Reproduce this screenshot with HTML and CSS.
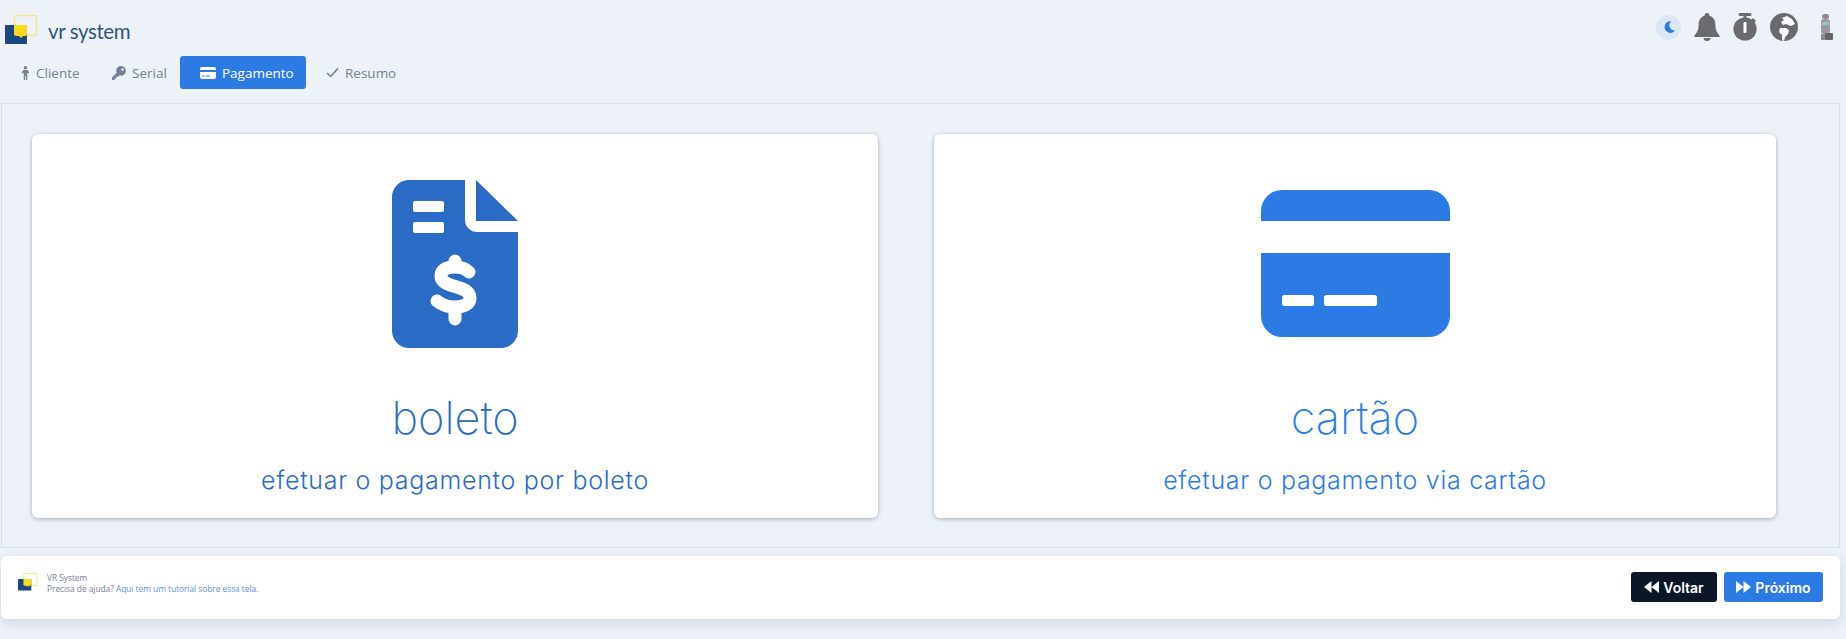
FILE: index.html
```html
<!DOCTYPE html>
<html lang="pt-BR">
<head>
    <meta charset="UTF-8">
    <title>VR System - Pagamento</title>
    <link rel="stylesheet" href="styles.css">
</head>
<body>
<header class="topbar">
    <div class="brand">
        <svg class="logo" viewBox="0 0 33 30" width="33" height="30">
            <rect x="9.5" y="0.5" width="22" height="20" rx="2" fill="none" stroke="#f8e48c" stroke-width="1.4"/>
            <rect x="0" y="10" width="22" height="19" rx="1" fill="#1b4781"/>
            <path d="M9 10h13v9a2 2 0 0 1-2 2h-2l-2 2-2-2h-3a2 2 0 0 1-2-2z" fill="#fbd91d"/>
        </svg>
        <span class="brand-name">vr system</span>
    </div>
    <div class="top-icons">
        <span class="moon-wrap">
            <svg viewBox="0 0 16 16" width="14" height="14"><path d="M10.5 1.5A6.6 6.6 0 1 0 15 12a6 6 0 0 1-4.500-10.500z" fill="#2b7ae4"/></svg>
        </span>
        <svg class="top-icon" viewBox="0 0 26 28" width="26" height="28"><path d="M13 0a2.400 2.400 0 0 1 2.400 2.700C20 3.900 21.400 8 21.400 12c0 5 1.600 7.500 4.200 10.500v1.500H.4v-1.500C3 19.500 4.600 17 4.600 12c0-4 1.400-8.100 6-9.300A2.400 2.400 0 0 1 13 0zM9.500 25h7a3.500 3 0 0 1-7 0z" fill="#6b6b6f"/></svg>
        <svg class="top-icon" viewBox="0 0 24 28" width="24" height="28"><path d="M7 0h10a1.200 1.200 0 0 1 0 3h-3.500v2h-3V3H7a1.200 1.200 0 0 1 0-3z" fill="#6b6b6f"/><circle cx="12" cy="16" r="11.600" fill="#6b6b6f"/><path d="M20 5l3 3-2 2-3-3z" fill="#6b6b6f"/><rect x="10.500" y="9" width="3" height="11" rx="1" fill="#fff"/></svg>
        <svg class="top-icon" viewBox="0 0 28 28" width="28" height="28"><circle cx="14" cy="14" r="14" fill="#6b6b6f"/><path d="M12 5l5-2 5 3 3 5-4 2-5-2-3 1-2-3 3-2zM10 15h6l3 2-1 4-3 3-1 4-2-1v-5l-3-3z" fill="#fff"/></svg>
        <svg class="robot" viewBox="0 0 14 26" width="14" height="26"><rect x="3" y="0" width="7" height="5" rx="2.500" fill="#8d8d90"/><rect x="2" y="5" width="9" height="15" rx="3" fill="#9a9a9d"/><rect x="3" y="8" width="7" height="3" fill="#8fc3d8"/><rect x="6" y="19" width="8" height="7" rx="1" fill="#66666a"/><rect x="2" y="20" width="4" height="6" fill="#8d8d90"/></svg>
    </div>
</header>

<nav class="tabs">
    <a class="tab tab-cliente">
        <svg viewBox="0 0 10 16" width="9" height="14"><circle cx="5" cy="2" r="2" fill="currentColor"/><path d="M2.500 4.500h5l2 3.500-1.200.7L7 7v9H5.500v-5h-1v5H3V7L1.700 8.700.5 8z" fill="currentColor"/></svg>
        Cliente
    </a>
    <a class="tab tab-serial">
        <svg viewBox="0 0 16 16" width="14" height="14"><path d="M10.500 0a5.500 5.500 0 1 1-1.900 10.700L7 12.300H5v2H3V16H0v-3l5.300-5.300A5.500 5.500 0 0 1 10.500 0zm1.500 2.500a1.500 1.500 0 1 0 0 3 1.500 1.500 0 0 0 0-3z" fill="currentColor"/></svg>
        Serial
    </a>
    <a class="tab tab-active">
        <svg viewBox="0 0 16 12" width="16" height="12"><path d="M2 0h12a2 2 0 0 1 2 2v1H0V2a2 2 0 0 1 2-2zM0 5h16v5a2 2 0 0 1-2 2H2a2 2 0 0 1-2-2zm2 3.500v1h2.500v-1zm3.500 0v1H10v-1z" fill="#fff"/></svg>
        Pagamento
    </a>
    <a class="tab tab-resumo">
        <svg viewBox="0 0 14 12" width="13" height="11"><path d="M1 6.500l4 3.800L13 1.500" fill="none" stroke="currentColor" stroke-width="1.700"/></svg>
        Resumo
    </a>
</nav>

<main class="panel">
    <section class="card card-boleto">
        <svg class="card-icon" viewBox="0 0 126 168" width="126" height="168">
            <path d="M17 0h56v40a12 12 0 0 0 12 12h41v99a17 17 0 0 1-17 17H17a17 17 0 0 1-17-17V17A17 17 0 0 1 17 0z" fill="#2a6bc6"/>
            <path d="M84 0l42 41H84z" fill="#2a6bc6"/>
            <rect x="21" y="21" width="31" height="11" rx="2" fill="#fff"/>
            <rect x="21" y="42" width="31" height="11" rx="2" fill="#fff"/>
            <path d="M77 92c-3-3-8-5-14-5-9 0-14 3-14 9 0 13 29 8 29 22 0 6-6 9-15 9-7 0-13-2-18-6M63 81v6M63 127v12" fill="none" stroke="#fff" stroke-width="13" stroke-linecap="round"/>
        </svg>
        <h2 class="card-title">boleto</h2>
        <p class="card-text">efetuar o pagamento por boleto</p>
    </section>
    <section class="card card-cartao">
        <svg class="card-icon" viewBox="0 0 189 147" width="189" height="147">
            <path d="M21 0h147a21 21 0 0 1 21 21v10H0V21A21 21 0 0 1 21 0z" fill="#2c7be5"/>
            <path d="M0 63h189v63a21 21 0 0 1-21 21H21a21 21 0 0 1-21-21z" fill="#2c7be5"/>
            <rect x="21" y="105" width="32" height="11" rx="2.500" fill="#fff"/>
            <rect x="63" y="105" width="53" height="11" rx="2.500" fill="#fff"/>
        </svg>
        <h2 class="card-title">cartão</h2>
        <p class="card-text">efetuar o pagamento via cartão</p>
    </section>
</main>

<footer class="helpbar">
    <div class="help">
        <svg class="help-logo" viewBox="0 0 33 30" width="20" height="20">
            <rect x="9.500" y="0.500" width="22" height="20" rx="2" fill="none" stroke="#f8e48c" stroke-width="1.800"/>
            <rect x="0" y="10" width="22" height="19" rx="1" fill="#1b4781"/>
            <path d="M9 10h13v9a2 2 0 0 1-2 2h-2l-2 2-2-2h-3a2 2 0 0 1-2-2z" fill="#fbd91d"/>
        </svg>
        <div class="help-text">
            <div>VR System</div>
            <div>Precisa de ajuda? <a class="help-link">Aqui tem um tutorial sobre essa tela.</a></div>
        </div>
    </div>
    <div class="actions">
        <button class="btn btn-dark">
            <svg viewBox="0 0 14 11" width="15" height="12"><path d="M7 0v11L0 5.500zM14 0v11L7 5.500z" fill="#fff"/></svg>
            Voltar
        </button>
        <button class="btn btn-blue">
            <svg viewBox="0 0 14 11" width="15" height="12"><path d="M0 0v11l7-5.500zM7 0v11l7-5.500z" fill="#fff"/></svg>
            Próximo
        </button>
    </div>
</footer>
</body>
</html>
```
FILE: styles.css
```css
* {
    box-sizing: border-box;
}
body {
    margin: 0;
    height: 639px;
    background-color: #edf2f9;
    font-family: "Open Sans", "Noto Sans", sans-serif;
    overflow: hidden;
}
.topbar {
    height: 56px;
    padding: 15px 13px 0 5px;
    display: flex;
    justify-content: space-between;
    align-items: flex-start;
}
.brand {
    display: flex;
    align-items: center;
    gap: 10px;
}
.brand-name {
    font-family: "Lato", sans-serif;
    font-size: 20.5px;
    letter-spacing: -0.4px;
    color: #31527f;
    margin-top: 2px;
}
.top-icons {
    display: flex;
    align-items: center;
    gap: 13px;
    margin-top: -2px;
}
.moon-wrap {
    width: 25px;
    height: 25px;
    border-radius: 50%;
    background-color: #dde6f3;
    display: flex;
    align-items: center;
    justify-content: center;
}
.robot {
    margin-left: 8px;
}
.tabs {
    display: flex;
    height: 33px;
    margin-bottom: 14px;
}
.tab {
    display: flex;
    align-items: center;
    gap: 6px;
    font-size: 13.5px;
    color: #748194;
    border-radius: 3px;
}
.tab-cliente {
    margin-left: 21px;
    width: 91px;
}
.tab-serial {
    margin-left: 0;
    width: 68px;
}
.tab-active {
    width: 126px;
    padding-left: 20px;
    background-color: #2c7be5;
    color: #fff;
}
.tab-resumo {
    margin-left: 20px;
}
.panel {
    height: 445px;
    margin: 0 6px 0 1px;
    border: 1px solid #d8e2ef;
    padding: 30px 63px 0 30px;
    display: flex;
    justify-content: space-between;
}
.card {
    height: 384px;
    background-color: #fff;
    border-radius: 6px;
    box-shadow: 0 1px 4px rgba(65, 84, 110, 0.45);
    display: flex;
    flex-direction: column;
    align-items: center;
}
.card-boleto {
    width: 846px;
    padding-top: 46px;
    color: #2a6bc6;
}
.card-cartao {
    width: 842px;
    padding-top: 56px;
    color: #2c7be5;
}
.card-title {
    margin: 38px 0 0;
    font-family: "Inter", sans-serif;
    font-weight: 200;
    font-size: 45px;
    line-height: 64px;
}
.card-cartao .card-title {
    margin-top: 49px;
}
.card-text {
    margin: 13px 0 0;
    font-family: "Inter", sans-serif;
    font-weight: 300;
    font-size: 25px;
    line-height: 34px;
    letter-spacing: 0.7px;
}
.helpbar {
    height: 63px;
    margin: 8px 6px 0 1px;
    padding: 16px 17px 0 17px;
    background-color: #fff;
    border-radius: 6px;
    box-shadow: 0 4px 12px rgba(65, 84, 110, 0.18);
    display: flex;
    justify-content: space-between;
    align-items: flex-start;
}
.help {
    display: flex;
    gap: 9px;
}
.help-text {
    font-size: 8.3px;
    line-height: 11px;
    color: #748194;
}
.help-link {
    color: #5e8ee8;
}
.actions {
    display: flex;
    gap: 7px;
}
.btn {
    height: 30px;
    border: none;
    border-radius: 3px;
    color: #fff;
    font-family: "Inter", sans-serif;
    font-weight: 600;
    font-size: 14px;
    display: flex;
    align-items: center;
    justify-content: center;
    gap: 4px;
}
.btn-dark {
    width: 86px;
    background-color: #0b1727;
}
.btn-blue {
    width: 99px;
    background-color: #2c7be5;
}
```
